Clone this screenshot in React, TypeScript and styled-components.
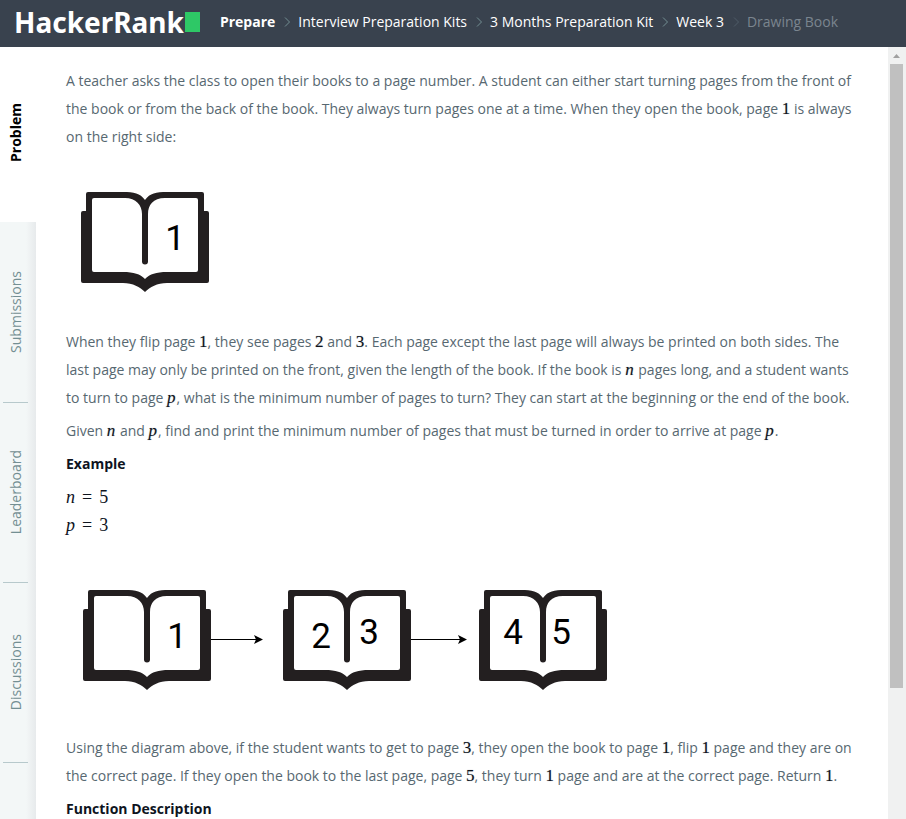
import React from "react";
import styled, { createGlobalStyle, css } from "styled-components";

const GlobalStyle = createGlobalStyle`
  * { box-sizing: border-box; }
  body {
    margin: 0;
    background: #fff;
    font-family: "Open Sans", "Noto Sans", sans-serif;
    font-size: 14px;
  }
`;

const Shell = styled.div`
  display: flex;
  flex-direction: column;
  height: 100vh;
  overflow: hidden;
`;

const TopBar = styled.header`
  display: flex;
  align-items: center;
  flex: none;
  height: 47px;
  padding: 0 14px 3px;
  background: #39424e;
`;

const Logo = styled.a`
  display: flex;
  align-items: center;
  height: 40px;
  margin-right: 20px;
  color: #fff;
  font: 700 28px/40px "Noto Sans", "Open Sans", sans-serif;
  text-decoration: none;
`;

const LogoCursor = styled.span`
  width: 15px;
  height: 20px;
  margin-left: 1px;
  background: #2ec866;
`;

const Crumbs = styled.ol`
  display: flex;
  align-items: center;
  margin: 0;
  padding: 0;
  list-style: none;
  white-space: nowrap;
`;

const Crumb = styled.li<{ $current?: boolean }>`
  display: flex;
  align-items: center;
  color: ${(p) => (p.$current ? "#7b858f" : "#fff")};
`;

const CrumbLink = styled.a<{ $strong?: boolean }>`
  color: inherit;
  font-weight: ${(p) => (p.$strong ? 700 : 400)};
  line-height: 20px;
  text-decoration: none;
`;

const Chevron = styled.svg<{ $dim?: boolean }>`
  width: 8px;
  height: 12px;
  margin: 0 7px 0 8px;
  fill: none;
  stroke: ${(p) => (p.$dim ? "#4f5c68" : "#738f93")};
`;

const Body = styled.div`
  display: flex;
  flex: 1;
  min-height: 0;
`;

const Tabs = styled.nav`
  display: flex;
  flex-direction: column;
  flex: none;
  width: 36px;
`;

const tabSurface = css`
  background: linear-gradient(to right, #f3f7f7 0 26px, #e7eaec 36px);
`;

const Tab = styled.a<{ $active?: boolean }>`
  display: flex;
  flex: none;
  flex-direction: column;
  align-items: center;
  justify-content: center;
  height: ${(p) => (p.$active ? 175 : 180)}px;
  padding: ${(p) => (p.$active ? "0 4px 5px 0" : "0 4px 0 0")};
  color: ${(p) => (p.$active ? "#000" : "#738f93")};
  font-weight: ${(p) => (p.$active ? 700 : 400)};
  text-decoration: none;
  ${(p) => !p.$active && tabSurface}
`;

const TabLabel = styled.span`
  writing-mode: vertical-rl;
  transform: rotate(180deg);
  line-height: 20px;
`;

const TabDivider = styled.hr`
  flex: none;
  width: 36px;
  height: 1px;
  margin: 0 0 -1px;
  border: 0;
  background: linear-gradient(to right, transparent 3px, #b7c9cc 3px 28px, transparent 28px);
  z-index: 1;
`;

const TabFiller = styled.div`
  flex: 1;
  ${tabSurface}
`;

const Statement = styled.main`
  display: flex;
  flex: 1;
  flex-direction: column;
  gap: 5px;
  min-width: 0;
  padding: 20px 34px 0 30px;
  overflow: hidden;
  color: #576871;
  line-height: 28px;
`;

const Paragraph = styled.p`
  flex: none;
  margin: 0;
`;

const Heading = styled.h2`
  flex: none;
  margin: 0;
  color: #0e141e;
  font-size: 14px;
  font-weight: 700;
  line-height: 28px;
`;

const Figure = styled.figure<{ $tall?: boolean }>`
  flex: none;
  height: ${(p) => (p.$tall ? 185 : 167)}px;
  margin: 0;
  padding-top: ${(p) => (p.$tall ? 44 : 34)}px;
`;

const Drawing = styled.svg`
  display: block;
  font: 35px Roboto, Arial, sans-serif;
  text-anchor: middle;
`;

const Num = styled.span`
  color: #0e141e;
  font: 400 17px/16px "Liberation Serif", "Times New Roman", serif;
  text-shadow: 0 0 1px rgba(14, 20, 30, 0.4);
`;

const Var = styled(Num).attrs({ as: "var" })`
  padding-right: 1px;
  font-style: italic;
`;

const Equation = styled.div`
  color: #0e141e;
  font: 18px/28px "Liberation Serif", "Times New Roman", serif;
`;

const Equals = styled.span`
  padding: 0 7px;
`;

const ScrollTrack = styled.div`
  display: flex;
  flex: none;
  flex-direction: column;
  width: 18px;
  padding: 0 3px 0 2px;
  background: #f0f1f1;
`;

const ScrollArrow = styled.svg`
  flex: none;
  width: 13px;
  height: 17px;
  fill: #a0a0a0;
`;

const ScrollThumb = styled.div`
  flex: 624;
  background: #c0c0c0;
`;

const ScrollRest = styled.div`
  flex: 131;
`;

function Book({ x, pages }: { x: number; pages: [string, number, number][] }) {
  return (
    <g transform={`translate(${x} 2)`}>
      <path
        fill="#231f20"
        d="M5 2Q5 0 7 0H42C53 0 59 1 64 8C69 1 75 0 86 0H121Q123 0 123 2V19H126Q128 19 128 21V89Q128 91 126 91H86C76 91 69 95 64 100C59 95 52 91 42 91H2Q0 91 0 89V21Q0 19 2 19H5Z"
      />
      <path
        fill="#fff"
        d="M13 6H44C55 6 61 13 61 22V69.500A3 3 0 0 0 67 69.500V22C67 13 72 6 84 6H115Q117 6 117 8V78Q117 80 115 80H86C75 80 69 82 64 87C59 82 53 80 42 80H13Q11 80 11 78V8Q11 6 13 6Z"
      />
      {pages.map(([label, cx, base]) => (
        <text key={label} x={cx} y={base}>
          {label}
        </text>
      ))}
    </g>
  );
}

function Arrow({ from, to }: { from: number; to: number }) {
  return (
    <g>
      <path d={`M${from} 51.500H${to - 6}`} stroke="#000" />
      <path d={`M${to} 51.500L${to - 9} 47L${to - 7} 51.500L${to - 9} 56Z`} />
    </g>
  );
}

const crumbs = ["Prepare", "Interview Preparation Kits", "3 Months Preparation Kit", "Week 3", "Drawing Book"];
const tabs = ["Submissions", "Leaderboard", "Discussions"];

export default function App() {
  return (
    <Shell>
      <GlobalStyle />
      <TopBar>
        <Logo href="#home">
          HackerRank
          <LogoCursor />
        </Logo>
        <nav aria-label="Breadcrumb">
          <Crumbs>
            {crumbs.map((name, i) => {
              const last = i === crumbs.length - 1;
              return (
                <Crumb key={name} $current={last}>
                  {i > 0 && (
                    <Chevron viewBox="0 0 8 12" $dim={last} aria-hidden="true">
                      <path d="M2 1.500L6.500 6L2 10.500" />
                    </Chevron>
                  )}
                  <CrumbLink href="#crumb" $strong={i === 0}>
                    {name}
                  </CrumbLink>
                </Crumb>
              );
            })}
          </Crumbs>
        </nav>
      </TopBar>
      <Body>
        <Tabs aria-label="Challenge sections">
          <Tab href="#problem" $active>
            <TabLabel>Problem</TabLabel>
          </Tab>
          {tabs.map((name) => (
            <React.Fragment key={name}>
              <Tab href={`#${name.toLowerCase()}`}>
                <TabLabel>{name}</TabLabel>
              </Tab>
              <TabDivider />
            </React.Fragment>
          ))}
          <TabFiller />
        </Tabs>
        <Statement>
          <Paragraph>
            A teacher asks the class to open their books to a page number. A student can either start turning pages
            from the front of the book or from the back of the book. They always turn pages one at a time. When they
            open the book, page <Num>1</Num> is always on the right side:
          </Paragraph>
          <Figure>
            <Drawing width="160" height="104" role="img" aria-label="Open book with page 1 on the right">
              <Book x={15} pages={[["1", 94, 58]]} />
            </Drawing>
          </Figure>
          <Paragraph>
            When they flip page <Num>1</Num>, they see pages <Num>2</Num> and <Num>3</Num>. Each page except the last
            page will always be printed on both sides. The last page may only be printed on the front, given the
            length of the book. If the book is <Var>n</Var> pages long, and a student wants to turn to page{" "}
            <Var>p</Var>, what is the minimum number of pages to turn? They can start at the beginning or the end of
            the book.
          </Paragraph>
          <Paragraph>
            Given <Var>n</Var> and <Var>p</Var>, find and print the minimum number of pages that must be turned in
            order to arrive at page <Var>p</Var>.
          </Paragraph>
          <Heading>Example</Heading>
          <div>
            <Equation>
              <i>n</i>
              <Equals>=</Equals>5
            </Equation>
            <Equation>
              <i>p</i>
              <Equals>=</Equals>3
            </Equation>
          </div>
          <Figure $tall>
            <Drawing width="560" height="104" role="img" aria-label="Turning from page 1 to pages 2 and 3, then 4 and 5">
              <Book x={17} pages={[["1", 94, 58]]} />
              <Arrow from={145} to={197} />
              <Book x={217} pages={[["2", 38, 58], ["3", 86, 54]]} />
              <Arrow from={345} to={401} />
              <Book x={413} pages={[["4", 34, 54], ["5", 82, 54]]} />
            </Drawing>
          </Figure>
          <Paragraph>
            Using the diagram above, if the student wants to get to page <Num>3</Num>, they open the book to page{" "}
            <Num>1</Num>, flip <Num>1</Num> page and they are on the correct page. If they open the book to the last
            page, page <Num>5</Num>, they turn <Num>1</Num> page and are at the correct page. Return <Num>1</Num>.
          </Paragraph>
          <Heading>Function Description</Heading>
        </Statement>
        <ScrollTrack aria-hidden="true">
          <ScrollArrow viewBox="0 0 13 17">
            <path d="M3 11L6.500 7L10 11Z" />
          </ScrollArrow>
          <ScrollThumb />
          <ScrollRest />
        </ScrollTrack>
      </Body>
    </Shell>
  );
}
